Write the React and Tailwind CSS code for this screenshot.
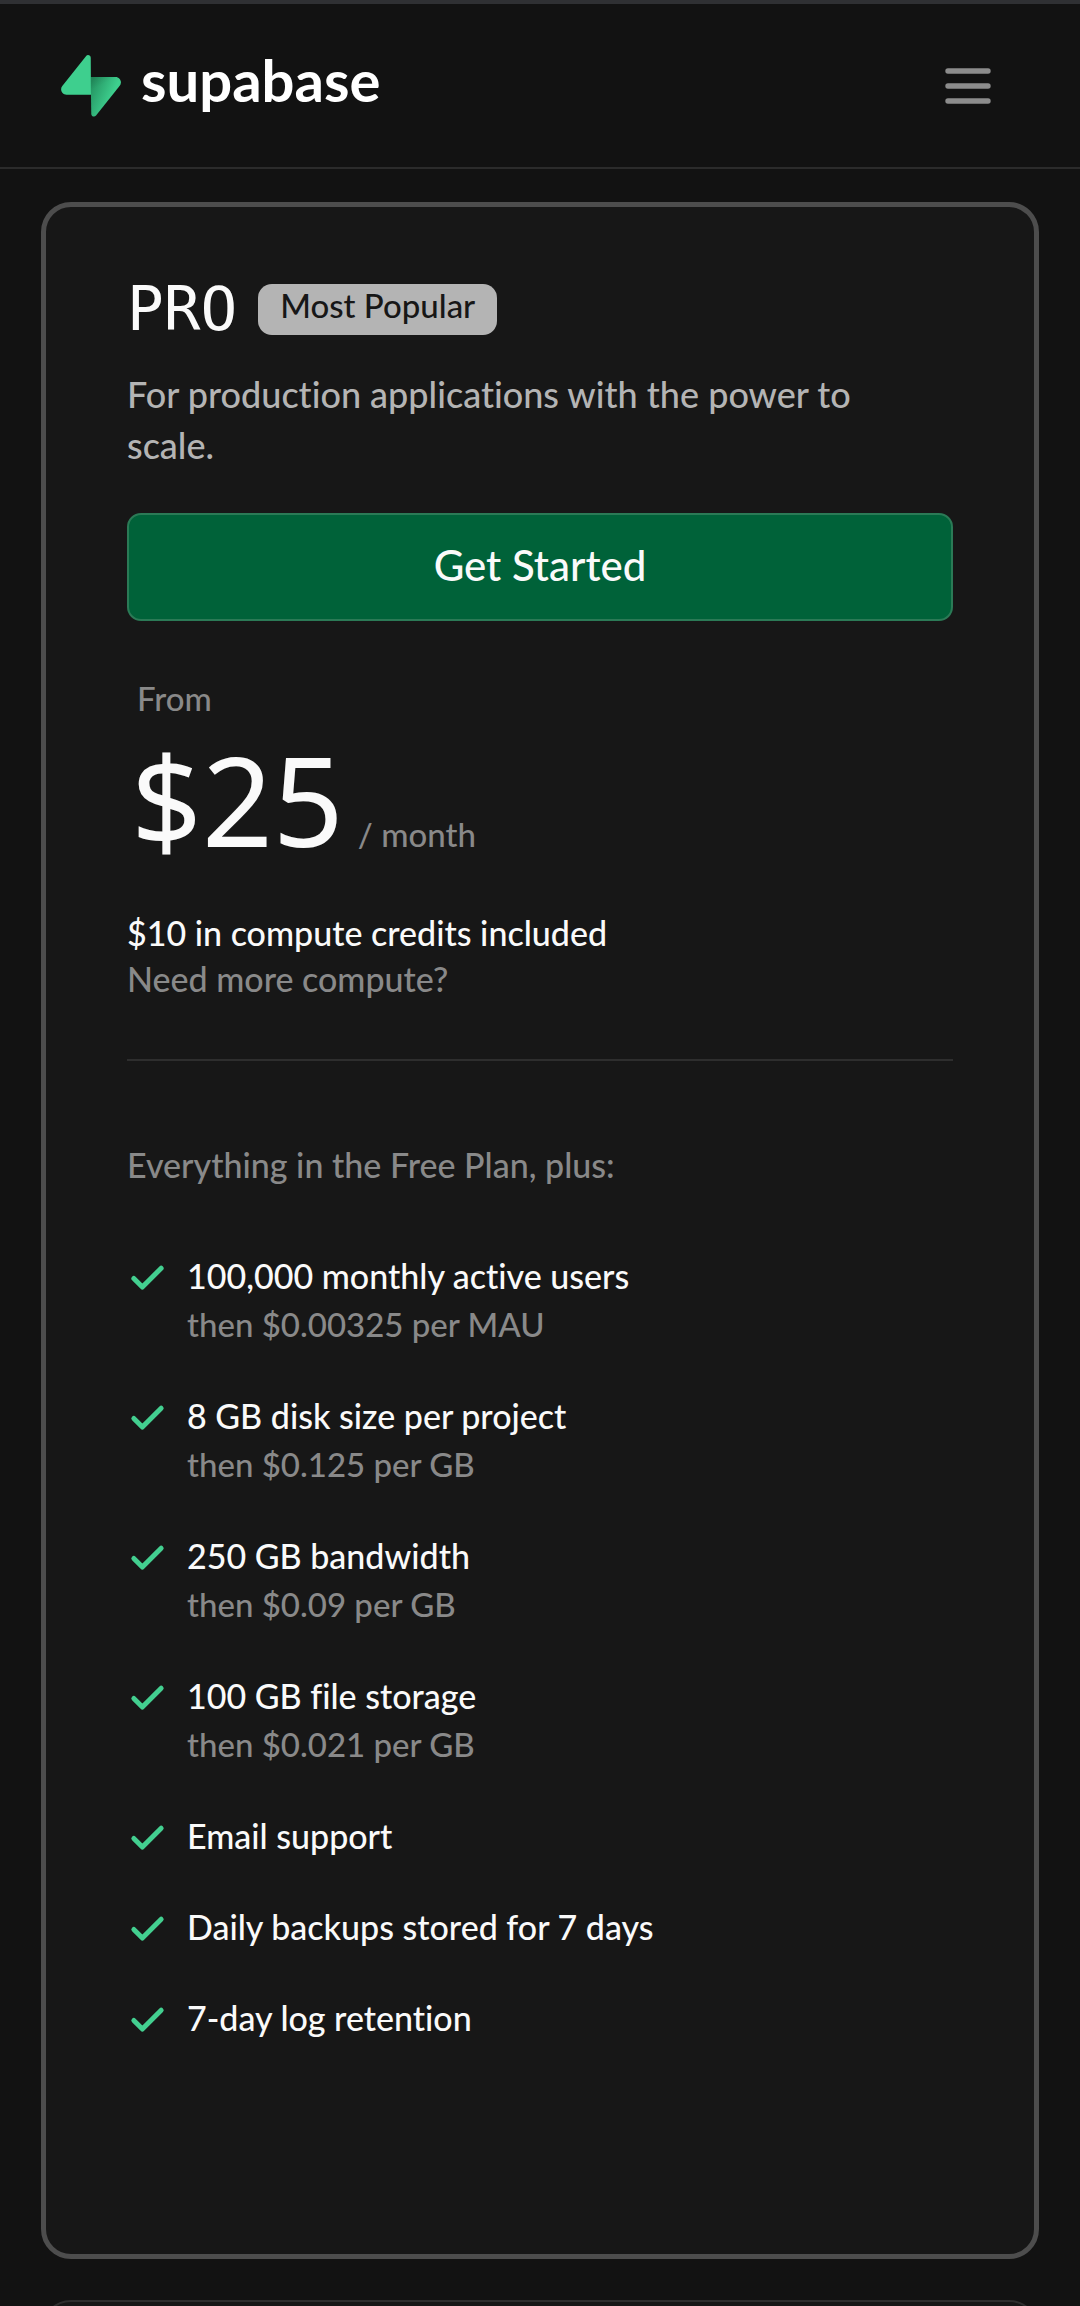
import { Check } from 'lucide-react';

const features = [
  { text: '100,000 monthly active users', sub: 'then $0.00325 per MAU' },
  { text: '8 GB disk size per project', sub: 'then $0.125 per GB' },
  { text: '250 GB bandwidth', sub: 'then $0.09 per GB' },
  { text: '100 GB file storage', sub: 'then $0.021 per GB' },
  { text: 'Email support' },
  { text: 'Daily backups stored for 7 days' },
  { text: '7-day log retention' },
];

function Logo() {
  return (
    <svg className="w-[60px] h-[62px]" viewBox="0 0 109 113" fill="none" aria-hidden="true">
      <path
        d="M63.7076 110.284C60.8481 113.885 55.0502 111.912 54.9813 107.314L53.9738 40.0627L99.1935 40.0627C107.384 40.0627 111.952 49.5228 106.859 55.9374L63.7076 110.284Z"
        fill="url(#bolt)"
      />
      <path
        d="M63.7076 110.284C60.8481 113.885 55.0502 111.912 54.9813 107.314L53.9738 40.0627L99.1935 40.0627C107.384 40.0627 111.952 49.5228 106.859 55.9374L63.7076 110.284Z"
        fill="url(#shade)"
        fillOpacity="0.2"
      />
      <path
        d="M45.317 2.07103C48.1765 -1.53037 53.9745 0.442937 54.0434 5.041L54.4849 72.2922H9.83113C1.64038 72.2922 -2.92775 62.8321 2.1655 56.4175L45.317 2.07103Z"
        fill="#3ECF8E"
      />
      <defs>
        <linearGradient id="bolt" x1="53.97" y1="54.97" x2="94.16" y2="71.83" gradientUnits="userSpaceOnUse">
          <stop stopColor="#249361" />
          <stop offset="1" stopColor="#3ECF8E" />
        </linearGradient>
        <linearGradient id="shade" x1="36.16" y1="30.58" x2="54.48" y2="65.08" gradientUnits="userSpaceOnUse">
          <stop />
          <stop offset="1" stopOpacity="0" />
        </linearGradient>
      </defs>
    </svg>
  );
}

function Header() {
  return (
    <header className="flex items-center justify-between h-[169px] pl-[61px] pr-[89px] border-t-4 border-t-[#2f3033] border-b-2 border-b-[#2b2b2b]">
      <a href="#" className="flex items-center gap-5">
        <Logo />
        <span className="pb-3 text-[58px] leading-[56px] font-bold text-white">supabase</span>
      </a>
      <button type="button" aria-label="Open menu" className="text-[#8c8c8c]">
        <svg className="w-[46px] h-[38px]" viewBox="0 0 46 38" stroke="currentColor" strokeWidth="5.4" strokeLinecap="round">
          <path d="M3 4h40M3 19h40M3 34h40" />
        </svg>
      </button>
    </header>
  );
}

function Feature({ text, sub }) {
  return (
    <li className="flex items-start gap-[19px]">
      <Check className="w-[41px] h-[41px] mt-[7px] shrink-0 text-[#43cf90]" strokeWidth={2.9} />
      <div className="flex flex-col leading-[49px]">
        <span className="text-[34px] text-[#fafafa]">{text}</span>
        {sub && <span className="text-[33px] text-[#898989]">{sub}</span>}
      </div>
    </li>
  );
}

function ProPlan() {
  return (
    <section className="flex flex-col rounded-[30px] border-5 border-[#4d4d4d] bg-[#171717] px-[81px] pt-[72px] pb-[212px]">
      <div className="flex items-center gap-[21px]">
        <h2 className="font-['DejaVu_Sans_Mono',monospace] text-[61px] leading-[60px] font-normal text-[#fafafa]">PRO</h2>
        <span className="rounded-[14px] bg-[#b4b4b4] px-[22px] pb-[9px] text-[33px] leading-[42px] text-[#171717]">
          Most Popular
        </span>
      </div>
      <p className="mt-[30px] pr-12 text-[36px] leading-[51px] text-[#b4b4b4]">
        For production applications with the power to scale.
      </p>
      <button
        type="button"
        className="mt-[42px] h-[108px] rounded-[14px] border-2 border-[#2b7a56] bg-[#006239] pb-1 text-[42px] text-[#fafafa]"
      >
        Get Started
      </button>

      <p className="mt-[54px] pl-[10px] text-[33px] leading-[46px] text-[#898989]">From</p>
      <div className="mt-4 flex items-baseline gap-[14px] pl-1">
        <span className="font-['Noto_Sans',sans-serif] text-[124px] leading-[124px] font-normal text-[#fafafa]">$25</span>
        <span className="text-[33px] text-[#898989]">/ month</span>
      </div>

      <div className="mt-[49px] flex flex-col items-start text-[34px] leading-[46px]">
        <span className="text-[#fafafa]">$10 in compute credits included</span>
        <a href="#" className="text-[#898989]">Need more compute?</a>
      </div>
      <hr className="mt-[57px] border-t-2 border-[#2e2e2e]" />

      <p className="mt-[79px] text-[34px] leading-[49px] text-[#898989]">Everything in the Free Plan, plus:</p>
      <ul className="mt-[62px] flex flex-col gap-[42px]">
        {features.map((f) => (
          <Feature key={f.text} text={f.text} sub={f.sub} />
        ))}
      </ul>
    </section>
  );
}

export default function App() {
  return (
    <div className="h-screen overflow-y-auto [scrollbar-width:none] [font-variant-ligatures:none] bg-[#121212] font-['Lato',sans-serif] font-medium">
      <Header />
      <main className="flex flex-col gap-[41px] px-[41px] pt-[33px]">
        <ProPlan />
        {/* top of the next plan */}
        <section className="h-[120px] rounded-[30px] border-2 border-[#2e2e2e] bg-[#171717]" />
      </main>
    </div>
  );
}
